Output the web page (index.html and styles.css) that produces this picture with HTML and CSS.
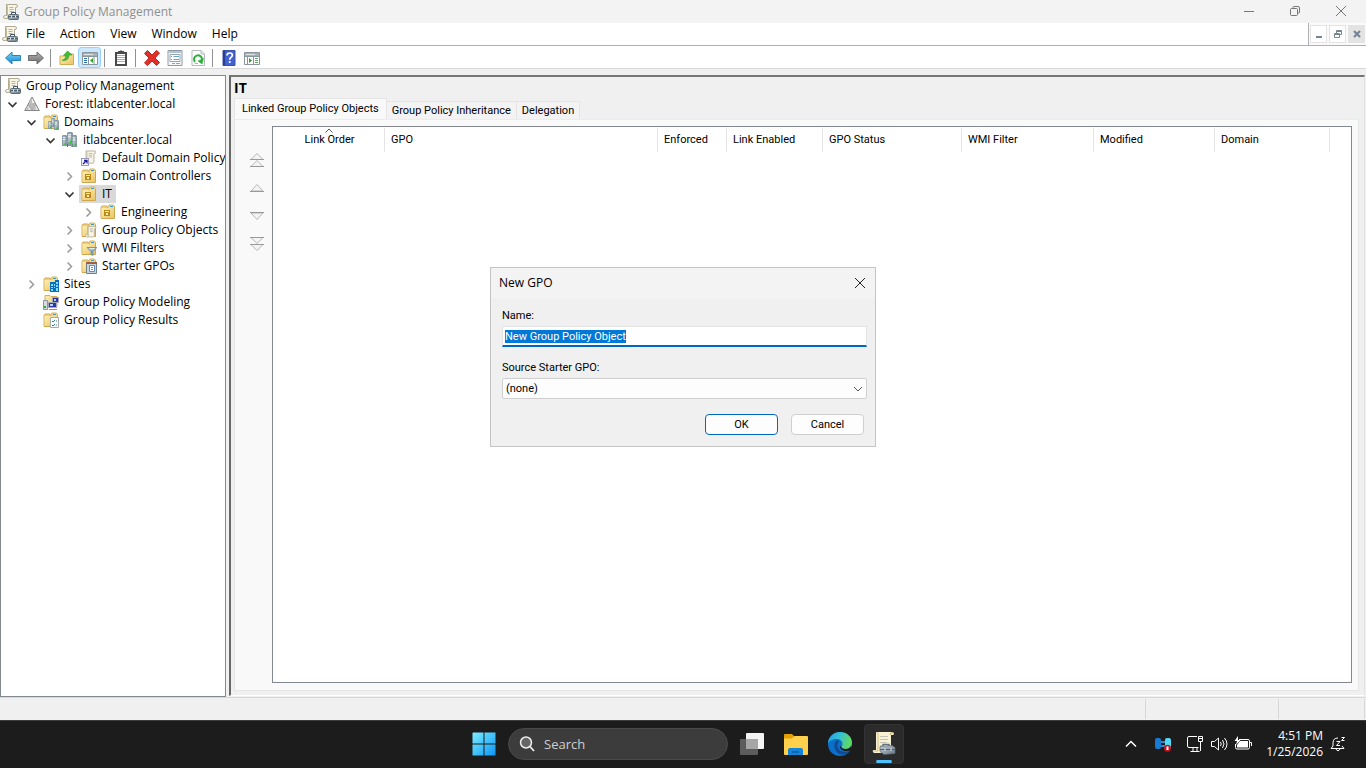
FILE: index.html
```html
<!DOCTYPE html>
<html lang="en">
<head>
  <meta charset="UTF-8">
  <meta name="viewport" content="width=device-width, initial-scale=1.0">
  <title>Group Policy Management</title>
  <link rel="stylesheet" href="styles.css">
</head>
<body>

  <!-- shared icons -->
  <svg class="sprite" aria-hidden="true">
    <defs>
      <linearGradient id="gFolder" x1="0" y1="0" x2="1" y2="1"><stop offset="0" stop-color="#fdeeb0"/><stop offset="1" stop-color="#e8c468"/></linearGradient>
      <linearGradient id="gBlue" x1="0" y1="0" x2="0" y2="1"><stop offset="0" stop-color="#7fd6fb"/><stop offset="1" stop-color="#0d86cf"/></linearGradient>
      <linearGradient id="gGray" x1="0" y1="0" x2="0" y2="1"><stop offset="0" stop-color="#b5b5b5"/><stop offset="1" stop-color="#6c6c6c"/></linearGradient>
      <linearGradient id="gSteel" x1="0" y1="0" x2="1" y2="1"><stop offset="0" stop-color="#c2ccd3"/><stop offset="1" stop-color="#667785"/></linearGradient>
      <symbol id="chevDown" viewBox="0 0 15 18"><path d="M3.5 7.500l4 4 4-4" fill="none" stroke="#333" stroke-width="1.600"/></symbol>
      <symbol id="chevRight" viewBox="0 0 15 18"><path d="M5.500 5.500l4 4-4 4" fill="none" stroke="#999" stroke-width="1.500"/></symbol>
      <symbol id="scroll" viewBox="0 0 16 16">
        <path d="M3.500.5H13q1.500 0 1.500 1.500T13 3.500h-.5V13q0 1.500-1.500 1.500H2Q.5 14.500.5 13t1.500-1.500h1.500z" fill="#f8f4e6" stroke="#b0a88f"/>
        <path d="M3.500 1q1 0 1 1.500v9H2M5 11.500q0 3-2 3" fill="none" stroke="#c5bb9c"/>
        <path d="M6.500 3.500h4M6.500 5.500h4M6.500 7.500h4" stroke="#b4b4ad"/>
      </symbol>
      <symbol id="gpm" viewBox="0 0 16 16">
        <use href="#scroll"/>
        <path d="M8.500 10.500V8.500h4v2" fill="none" stroke="#43525c"/>
        <rect x="5.500" y="10.500" width="10" height="5" rx="1" fill="url(#gSteel)" stroke="#5b6b77"/>
        <path d="M6 12.500h9" stroke="#4a5963"/><path d="M8 11.500h1v2H8zM12 11.500h1v2h-1z" fill="#e9eef0"/>
      </symbol>
      <symbol id="folder" viewBox="0 0 16 16">
        <path d="M1 3.500L2 2h5l1 1.500V14H1z" fill="#edce7a" stroke="#d3b05c"/>
        <path d="M8 2.500L9 1h4.500l1 1.500v11H8z" fill="#f6dc8d" stroke="#d3b05c"/>
        <path d="M10 2.500h3" stroke="#3999d4"/>
        <path d="M1.500 4h12.500v10h-12.500z" fill="url(#gFolder)"/>
        <path d="M1 14.500h13.500v-11" fill="none" stroke="#cfa64e"/>
      </symbol>
      <symbol id="ou" viewBox="0 0 16 16">
        <use href="#folder"/>
        <rect x="4" y="6" width="6" height="6" fill="#bb8918"/><path d="M5 7h4v1H5zM6 9h2v2H6z" fill="#fff0b7"/>
      </symbol>
      <symbol id="server" viewBox="0 0 6 11" preserveAspectRatio="none">
        <path d="M0 1L1 0h4l1 1v10H0z" fill="#8799a5"/>
        <path d="M1 1.500h3v8H1z" fill="#aebbc4"/><path d="M1 2.500h3M1 4.500h3" stroke="#eef3f5"/>
        <path d="M3 8h2v2H3z" fill="#23d019"/>
      </symbol>
      <symbol id="domain" viewBox="0 0 16 16">
        <use href="#server" x="5" y="0" width="6" height="12"/>
        <use href="#server" x="0" y="3" width="5" height="11"/>
        <use href="#server" x="10" y="3" width="5" height="12"/>
        <path d="M5.500 12v3M10 12v3" stroke="#5d6f7b"/><path d="M6 12h4v2H6z" fill="#8799a5"/>
      </symbol>
      <symbol id="domains" viewBox="0 0 16 16">
        <use href="#folder"/>
        <use href="#server" x="8" y="4" width="4" height="9"/>
        <use href="#server" x="5" y="7" width="4" height="8"/>
        <use href="#server" x="11" y="6" width="5" height="10"/>
      </symbol>
      <symbol id="forest" viewBox="0 0 16 16">
        <path d="M8 1l3.700 7H4.300z" fill="#f1f1f1" stroke="#858585"/>
        <path d="M4.300 8L8 14.500H.7zM11.700 8l3.600 6.500H8z" fill="#e4e4e4" stroke="#858585"/>
        <path d="M4.300 8h7.400L8 14.500z" fill="#b9b9b9"/>
        <path d="M8 2.500V8H5zM4.300 9.500V14H2zM11.700 9.500V14H9.500z" fill="#bdbdbd"/>
      </symbol>
      <symbol id="gpoLink" viewBox="0 0 16 16">
        <use href="#scroll" x="2" width="14" height="15"/>
        <rect x=".5" y="8.500" width="7" height="7" fill="#f3f2ff" stroke="#9b99b8"/>
        <path d="M2 14l3.500-3.500M3 10.500h3v3" fill="none" stroke="#221c96" stroke-width="1.300"/>
      </symbol>
      <symbol id="gpos" viewBox="0 0 16 16"><use href="#folder"/><use href="#scroll" x="4" y="4" width="12" height="12"/></symbol>
      <symbol id="wmi" viewBox="0 0 16 16">
        <use href="#folder"/>
        <path d="M6 7.500h10l-4 4v4l-2-1v-3z" fill="#89a8bb" stroke="#6c8697" stroke-width=".7"/><path d="M7.500 8h7l-2 1.500H9z" fill="#dce9ef"/>
      </symbol>
      <symbol id="starter" viewBox="0 0 16 16">
        <use href="#folder"/>
        <path d="M5.500 4.500h10v11h-10z" fill="#c8d5df" stroke="#6f7f8c"/><path d="M5 4h11v2H5z" fill="#9e6140"/>
        <path d="M8.500 7.500h5v6h-5z" fill="#fff" stroke="#5d8dbb"/><path d="M10 9.500h2M10 11.500h2" stroke="#5d8dbb"/>
      </symbol>
      <symbol id="sites" viewBox="0 0 16 16">
        <use href="#folder"/>
        <path d="M7 6h5V4h4v12H7z" fill="#0b6db7"/>
        <path d="M8 8h2v2H8zM11 8h1v2h-1zM8 11h2v1H8zM8 13h2v2H8zM11 11h1v1h-1zM13 6h2v2h-2zM13 9h2v2h-2zM13 12h2v3h-2z" fill="#82dcff"/>
      </symbol>
      <symbol id="modeling" viewBox="0 0 16 16">
        <path d="M2 1.500h5l1 1h6V13H2z" fill="url(#gFolder)" stroke="#d3b05c"/>
        <path d="M.5 6.500h4v9h-4z" fill="#d7dbe1" stroke="#8e95a0"/><path d="M1 12h2v2H1z" fill="#25b522"/>
        <path d="M9.500 3.500h6v5h-6zM5.500 8.500h8v5h-8z" fill="#2b37a8" stroke="#a4a9ba"/>
        <path d="M11 5h2v2h-2zM7 10h3v2H7z" fill="#b8cff8"/><path d="M6 15.500h8" stroke="#8d939b"/>
      </symbol>
      <symbol id="results" viewBox="0 0 16 16">
        <use href="#folder"/>
        <path d="M7.500 5.500h8v10h-8z" fill="#fbfcfc" stroke="#a3adb2"/>
        <path d="M9 9l1 1 2-2M9 13l1 1 2-2" fill="none" stroke="#267bc1"/><path d="M13 9h1M13 13h1" stroke="#70818a"/>
      </symbol>
    </defs>
  </svg>

  <header class="titlebar">
    <svg class="icon"><use href="#gpm"/></svg>
    <span class="titlebar-text">Group Policy Management</span>
    <div class="window-buttons">
      <button type="button" aria-label="Minimize"><svg viewBox="0 0 12 12"><path d="M1 6.500h10"/></svg></button>
      <button type="button" aria-label="Restore"><svg viewBox="0 0 12 12"><rect x="1.500" y="3.500" width="7" height="7" rx="1"/><path d="M4 3V2.500q0-1 1-1h4q1.500 0 1.500 1.500v4q0 1-1 1H9"/></svg></button>
      <button type="button" aria-label="Close"><svg viewBox="0 0 12 12"><path d="M1 1l10 10M11 1L1 11"/></svg></button>
    </div>
  </header>

  <nav class="menubar">
    <div class="menu-items">
      <svg class="icon"><use href="#gpm"/></svg>
      <button type="button">File</button>
      <button type="button">Action</button>
      <button type="button">View</button>
      <button type="button">Window</button>
      <button type="button">Help</button>
    </div>
    <div class="mdi-buttons">
      <button type="button" aria-label="Minimize child"><svg viewBox="0 0 10 10"><path d="M2 8h6" stroke-width="2"/></svg></button>
      <button type="button" aria-label="Restore child"><svg viewBox="0 0 10 10"><path d="M1.500 4.500h5v4h-5zM1 5.500h5.500M3.500 4V1.500h5v4H7M3.500 2.500h5"/></svg></button>
      <button type="button" class="mdi-close" aria-label="Close child"><svg viewBox="0 0 10 10"><path d="M2 2l6 6M8 2L2 8" stroke-width="2.200"/></svg></button>
    </div>
  </nav>

  <div class="toolbar">
    <button type="button" aria-label="Back"><svg class="icon" viewBox="0 0 16 16"><path d="M.5 8L7 2v3.500h8.500v5H7V14z" fill="url(#gBlue)" stroke="#2c83ba"/></svg></button>
    <button type="button" aria-label="Forward"><svg class="icon" viewBox="0 0 16 16"><path d="M15.500 8L9 2v3.500H.5v5H9V14z" fill="url(#gGray)" stroke="#6c6c6c"/></svg></button>
    <span class="separator"></span>
    <button type="button" aria-label="Up one level"><svg class="icon" viewBox="0 0 16 16"><path d="M1 6h7l1-2h5.500v10.500H1z" fill="url(#gFolder)" stroke="#d0ab55"/><path d="M3 10.500q4-1 4-5H4.500L8.500 1l4.500 4h-3q0 6-7 5.500z" fill="#43bd34" stroke="#2d9625" stroke-width=".6"/></svg></button>
    <button type="button" class="pressed" aria-label="Show console tree"><svg class="icon" viewBox="0 0 16 16"><path d="M.5 2.500h15v12H.5z" fill="#fff" stroke="#8b959d"/><path d="M1 3h14v3H1z" fill="#a6afb6"/><path d="M2 4.500h9" stroke="#dfe4e7"/><path d="M1 6.500h14M6.500 7v7M12 7v7" stroke="#8b959d"/><path d="M2 8.500h3M2 10.500h3M2 12.500h3" stroke="#286b9d"/><path d="M11 8v5L8 10.500z" fill="#2ca329"/></svg></button>
    <span class="separator"></span>
    <button type="button" aria-label="Paste"><svg class="icon" viewBox="0 0 16 16"><path d="M3 3h10v12H3z" fill="#fff" stroke="#4a4a4a" stroke-width="2"/><path d="M5 1h2l1-1 1 1h2v3H5z" fill="#4a4a4a"/><path d="M4 5.500h8M4 7.500h8M4 9.500h8M4 11.500h8" stroke="#aaa"/></svg></button>
    <span class="separator"></span>
    <button type="button" aria-label="Delete"><svg class="icon" viewBox="0 0 16 16"><path d="M3.500.5L8 5l4.500-4.500 3 2.500L11 8l4.500 4.500-3 3L8 11l-4.500 4.500-3-2.500L5 8 .5 3.500z" fill="#e0302a" stroke="#c42420"/></svg></button>
    <button type="button" aria-label="Properties"><svg class="icon" viewBox="0 0 16 16"><path d="M1 .5h14v15H1z" fill="#f6f9fb" stroke="#8c9ba7"/><path d="M1.500 1h13v2h-13z" fill="#b6c2ca"/><path d="M3 4.500h10v7H3z" fill="#fff" stroke="#95a5b2"/><path d="M4 6.500h1M4 9.500h1M6.500 6.500H12M6.500 9.500H12" stroke="#61a4cd"/><path d="M5 13.500h3M9 13.500h4" stroke="#96a5ae"/></svg></button>
    <button type="button" aria-label="Refresh"><svg class="icon" viewBox="0 0 16 16"><path d="M2 .5h9l3.500 3.500v11.500H2z" fill="#fff" stroke="#b3b9bd"/><path d="M11 .5V4h3.500" fill="none" stroke="#b3b9bd"/><path d="M5 12A4 4 0 1 1 12 9.500" fill="none" stroke="#2fae3b" stroke-width="2"/><path d="M13.500 8.500L12 14l-4-3zM5 13.500h3" fill="#2fae3b" stroke="#2fae3b" stroke-width=".6"/></svg></button>
    <span class="separator"></span>
    <button type="button" aria-label="Help"><svg class="icon" viewBox="0 0 16 16"><path d="M2 .5h12v15H2z" fill="#4263cf" stroke="#3a51a5"/><path d="M2 1h2v14H2z" fill="#263e95"/><path d="M6 5.500q0-2.500 2.700-2.500t2.700 2.200c0 2-2.700 2-2.700 4.500M8.700 11v2" fill="none" stroke="#fff" stroke-width="1.700"/></svg></button>
    <button type="button" aria-label="Show action pane"><svg class="icon" viewBox="0 0 16 16"><path d="M.5 2.500h15v12H.5z" fill="#fff" stroke="#8b959d"/><path d="M1 3h14v3H1z" fill="#a6afb6"/><path d="M2 4.500h9" stroke="#dfe4e7"/><path d="M1 6.500h14M9.500 7v7M3.500 7v7" stroke="#8b959d"/><path d="M11 8.500h3M11 10.500h3M11 12.500h3" stroke="#64a16a"/><path d="M5 8v5l3-2.500z" fill="#2ca329"/></svg></button>
  </div>

  <main class="workspace">
    <aside class="tree">
      <div class="node root"><span class="label"><svg class="icon"><use href="#gpm"/></svg>Group Policy Management</span></div>
      <ul>
        <li>
          <div class="node"><svg class="chevron"><use href="#chevDown"/></svg><span class="label"><svg class="icon"><use href="#forest"/></svg>Forest: itlabcenter.local</span></div>
          <ul>
            <li>
              <div class="node"><svg class="chevron"><use href="#chevDown"/></svg><span class="label"><svg class="icon"><use href="#domains"/></svg>Domains</span></div>
              <ul>
                <li>
                  <div class="node"><svg class="chevron"><use href="#chevDown"/></svg><span class="label"><svg class="icon"><use href="#domain"/></svg>itlabcenter.local</span></div>
                  <ul>
                    <li><div class="node"><svg class="chevron"></svg><span class="label"><svg class="icon"><use href="#gpoLink"/></svg>Default Domain Policy</span></div></li>
                    <li><div class="node"><svg class="chevron"><use href="#chevRight"/></svg><span class="label"><svg class="icon"><use href="#ou"/></svg>Domain Controllers</span></div></li>
                    <li>
                      <div class="node"><svg class="chevron"><use href="#chevDown"/></svg><span class="label selected"><svg class="icon"><use href="#ou"/></svg>IT</span></div>
                      <ul>
                        <li><div class="node"><svg class="chevron"><use href="#chevRight"/></svg><span class="label"><svg class="icon"><use href="#ou"/></svg>Engineering</span></div></li>
                      </ul>
                    </li>
                    <li><div class="node"><svg class="chevron"><use href="#chevRight"/></svg><span class="label"><svg class="icon"><use href="#gpos"/></svg>Group Policy Objects</span></div></li>
                    <li><div class="node"><svg class="chevron"><use href="#chevRight"/></svg><span class="label"><svg class="icon"><use href="#wmi"/></svg>WMI Filters</span></div></li>
                    <li><div class="node"><svg class="chevron"><use href="#chevRight"/></svg><span class="label"><svg class="icon"><use href="#starter"/></svg>Starter GPOs</span></div></li>
                  </ul>
                </li>
              </ul>
            </li>
            <li><div class="node"><svg class="chevron"><use href="#chevRight"/></svg><span class="label"><svg class="icon"><use href="#sites"/></svg>Sites</span></div></li>
            <li><div class="node"><svg class="chevron"></svg><span class="label"><svg class="icon"><use href="#modeling"/></svg>Group Policy Modeling</span></div></li>
            <li><div class="node"><svg class="chevron"></svg><span class="label"><svg class="icon"><use href="#results"/></svg>Group Policy Results</span></div></li>
          </ul>
        </li>
      </ul>
    </aside>

    <section class="details">
      <h1>IT</h1>
      <div class="tabs" role="tablist">
        <button type="button" role="tab" class="tab active" aria-selected="true">Linked Group Policy Objects</button>
        <button type="button" role="tab" class="tab">Group Policy Inheritance</button>
        <button type="button" role="tab" class="tab">Delegation</button>
      </div>
      <div class="tab-panel">
        <div class="order-buttons">
          <button type="button" aria-label="Move to top"><svg viewBox="0 0 16 16"><path d="M8 1.500L14 7.500H2zM8 8.500l6 6H2z"/><path class="base" d="M1 7.500h14M1 14.500h14"/></svg></button>
          <button type="button" aria-label="Move up"><svg viewBox="0 0 16 16"><path d="M8 4.500l6 6.500H2z"/><path class="base" d="M1 11.500h14"/></svg></button>
          <button type="button" aria-label="Move down"><svg viewBox="0 0 16 16"><path d="M8 11.500L2 5h12z"/><path class="base" d="M1 4.500h14"/></svg></button>
          <button type="button" aria-label="Move to bottom"><svg viewBox="0 0 16 16"><path d="M8 7.500l-6-6h12zM8 14.500l-6-6h12z"/><path class="base" d="M1 1.500h14M1 8.500h14"/></svg></button>
        </div>
        <div class="list">
          <table>
            <thead>
              <tr>
                <th class="col-order"><svg class="sort" viewBox="0 0 8 5"><path d="M.5 4.500L4 1l3.500 3.500" fill="none" stroke="#555"/></svg>Link Order</th>
                <th class="col-gpo">GPO</th>
                <th class="col-enforced">Enforced</th>
                <th class="col-enabled">Link Enabled</th>
                <th class="col-status">GPO Status</th>
                <th class="col-wmi">WMI Filter</th>
                <th class="col-modified">Modified</th>
                <th class="col-domain">Domain</th>
              </tr>
            </thead>
            <tbody></tbody>
          </table>
        </div>
      </div>
    </section>
  </main>

  <div class="statusbar"><span class="status-main"></span><span class="status-cell"></span><span class="status-end"></span></div>

  <footer class="taskbar">
    <div class="apps">
      <button type="button" class="app" aria-label="Start">
        <svg viewBox="0 0 24 24"><defs><linearGradient id="gWin" gradientUnits="userSpaceOnUse" x1="0" y1="0" x2="24" y2="24"><stop offset="0" stop-color="#7df0ff"/><stop offset="1" stop-color="#0a93f5"/></linearGradient></defs><path d="M1 .5h10.500v11H.5V1zM12.500.5h11v11h-11zM.5 12.500h11v11H.5zM12.500 12.500h11v11h-11z" fill="url(#gWin)"/></svg>
      </button>
      <label class="search">
        <svg viewBox="0 0 16 16"><circle cx="7" cy="6.500" r="5.500" fill="#666" stroke="#eee" stroke-width="1.500"/><path d="M11 10.500l4 4.500" stroke="#eee" stroke-width="1.800"/></svg>
        <input type="text" placeholder="Search" aria-label="Search">
      </label>
      <button type="button" class="app" aria-label="Task view">
        <svg viewBox="0 0 24 24"><rect x="6" y="1" width="18" height="16" rx="1" fill="#f4f4f4"/><rect x="0" y="7" width="18" height="16" rx="1" fill="#5c5c5c"/><path d="M6 7h12v10H6z" fill="#a6a6a6"/></svg>
      </button>
      <button type="button" class="app" aria-label="File Explorer">
        <svg viewBox="0 0 24 24"><path d="M0 3q0-1 1-1h7l2 2v4H0z" fill="#e5a100"/><path d="M0 6.500h8L10.500 4H23q1 0 1 1v17q0 1-1 1H1q-1 0-1-1z" fill="#ffd04b"/><path d="M4 23v-5q0-2 2-2h11q2 0 2 2v5z" fill="#1584d6"/><path d="M8 20h7" stroke="#075fae" stroke-width="1.500"/></svg>
      </button>
      <button type="button" class="app" aria-label="Microsoft Edge">
        <svg viewBox="0 0 24 24">
          <defs><linearGradient id="gEdge" x1="0" y1="0" x2="1" y2=".3"><stop offset="0" stop-color="#1d9de8"/><stop offset=".5" stop-color="#35c1d4"/><stop offset="1" stop-color="#5ed864"/></linearGradient></defs>
          <circle cx="12" cy="12" r="12" fill="#0b70ca"/>
          <path d="M0 12C0 4.500 6 0 12 0c7 0 12 5 12 10.500 0 4-3 6.500-6.500 6.500-2.500 0-4-1-4-2 0-.8 1-1.300 1-3C14.500 9 12 7 8.500 7 4 7 .5 9.500 0 12z" fill="url(#gEdge)"/>
          <path d="M8.500 8.500C5 11 6 18 10 21c4 3 9 1.500 12-2.500-4 2.500-10 1.500-12-2.500-1.500-3 0-5.500 1.500-6.500-1-.8-2-1.200-3-1z" fill="#134a91"/>
          <path d="M13.500 15c0 1 1.500 2 4 2 2.500 0 4.600-1.200 5.700-3.300L24 18l-1.800.5C17 20 12 18.500 11.800 14z" fill="#1c1c1c"/>
        </svg>
      </button>
      <button type="button" class="app running" aria-label="Group Policy Management">
        <svg viewBox="0 0 24 24">
          <path d="M4 0h17q1.500 1 .5 3H19v18H2q-2-1-1-3h3z" fill="#f7f0d6"/><path d="M4 0q2 0 2 2v17H1" fill="none" stroke="#d8c078"/><path d="M18 3q0-2.500 3-2.500" fill="none" stroke="#c0a55a"/>
          <path d="M8 4.500h8M8 7.500h8M8 10.500h7M8 13.500h2" stroke="#c4c2b2"/>
          <path d="M11 14.500v-2h6v2" fill="none" stroke="#61717c" stroke-width="1.500"/><path d="M8 14.500l12-1 3 2v6l-11 1-4-3z" fill="url(#gSteel)" stroke="#5a6975" stroke-width=".7"/><path d="M8 17.500h15" stroke="#53616c"/><path d="M13 16v3M19 16v3" stroke="#dce3e7"/>
        </svg>
      </button>
    </div>
    <div class="tray">
      <button type="button" class="tray-icon tray-more" aria-label="Hidden icons"><svg viewBox="0 0 20 16"><path d="M5 10.500l5-5 5 5" stroke-width="1.500"/></svg></button>
      <button type="button" class="tray-icon tray-agent" aria-label="Azure agent"><svg viewBox="0 0 20 16"><g stroke="none"><rect x="2" y="2" width="6" height="11" rx="2" fill="#177bd5"/><rect x="12" y="2" width="6" height="11" rx="2" fill="#53d9f4"/><path d="M8 5h4v2H8zM8 9h4v2H8z" fill="#288bcb"/><circle cx="14.500" cy="12.200" r="3.500" fill="#c1141d"/><path d="M13.500 10.500h2v3.500h-2z" fill="#fff"/></g></svg></button>
      <button type="button" class="tray-icon" aria-label="Network"><svg viewBox="0 0 20 16"><path d="M12 .5H4Q2.500.5 2.500 2v8q0 1.500 1.500 1.500h9.500M5.500 15.500h9M8 12v3M12 12v3M13.500.5h4v5h-4zM15.500 6v9M14 2.500h3"/></svg></button>
      <button type="button" class="tray-icon" aria-label="Volume"><svg viewBox="0 0 20 16"><path d="M2.500 5.500h3L9.500 2v12l-4-3.500h-3zM11.500 6q1.500 2 0 4M13.500 4q3 4 0 8M15.500 2q5 6 0 12"/></svg></button>
      <button type="button" class="tray-icon" aria-label="Battery"><svg viewBox="0 0 20 16"><path d="M6 3.500h9q1.500 0 1.500 1.500v6.500q0 1.500-1.500 1.500H4q-1.500 0-1.500-1.500V8M17 6.500h1.500v3.500"/><path d="M7 5h8v6.500H4V9z" fill="#fff" stroke="none"/><path d="M5 0L1.500 5H4L3 9l4.500-5H5z" fill="#fff" stroke="none"/></svg></button>
      <button type="button" class="clock"><span>4:51 PM</span><span>1/25/2026</span></button>
      <button type="button" class="tray-icon" aria-label="Notifications"><svg viewBox="0 0 20 16"><path d="M10 2q-5 0-5 5v3l-2 2.500h13L14 10M8 13q2 3.500 4 0M8.500 5.500H12l-3.500 4H12M13.500 1.500h3l-3 3h3"/></svg></button>
    </div>
  </footer>

  <div class="dialog-layer">
    <form class="dialog" id="newGpo" aria-labelledby="dialogTitle">
      <div class="dialog-title">
        <span id="dialogTitle">New GPO</span>
        <button type="button" aria-label="Close dialog"><svg viewBox="0 0 12 12"><path d="M1 1l10 10M11 1L1 11" stroke="#222" fill="none"/></svg></button>
      </div>
      <div class="dialog-body">
        <label for="gpoName">Name:</label>
        <input type="text" id="gpoName" value="New Group Policy Object">
        <label for="starterGpo">Source Starter GPO:</label>
        <div class="select-box">
          <select id="starterGpo"><option>(none)</option></select>
          <svg viewBox="0 0 10 6"><path d="M1 1l4 4 4-4" fill="none" stroke="#555"/></svg>
        </div>
        <div class="dialog-actions">
          <button type="submit" class="default">OK</button>
          <button type="button">Cancel</button>
        </div>
      </div>
    </form>
  </div>

  <script>
    const nameField = document.getElementById('gpoName');
    nameField.focus();
    nameField.select();

    document.getElementById('newGpo').addEventListener('submit', function (e) {
      e.preventDefault();
    });
  </script>

</body>
</html>
```
FILE: styles.css
```css
* {
  box-sizing: border-box;
}

body {
  margin: 0;
  height: 100vh;
  display: flex;
  flex-direction: column;
  overflow: hidden;
  background: #f0f0f0;
  color: #000;
  font-family: "Open Sans", "Noto Sans", sans-serif;
  font-size: 12px;
  line-height: 18px;
}

button,
input,
select {
  font: inherit;
  color: inherit;
}

button {
  border: none;
  background: none;
  padding: 0;
}

.sprite {
  position: absolute;
  width: 0;
  height: 0;
}

.icon {
  width: 16px;
  height: 16px;
  flex: none;
  display: block;
}

/* title bar */
.titlebar {
  display: flex;
  align-items: center;
  gap: 5px;
  height: 23px;
  padding: 0 2px 0 3px;
  background: #f3f3f3;
  color: #8f8f8f;
}

.window-buttons {
  display: flex;
  margin-left: auto;
}

.window-buttons button {
  width: 46px;
  height: 23px;
  display: grid;
  place-items: center;
  padding-bottom: 2px;
}

.window-buttons svg {
  width: 12px;
  height: 12px;
  fill: none;
  stroke: #777;
}

.menubar {
  display: flex;
  height: 23px;
  background: #fff;
}

.menu-items {
  flex: 1;
  display: flex;
  align-items: center;
  padding-left: 2px;
  border-right: 1px solid #b0b0b4;
  border-bottom: 1px solid #b0b0b4;
}

.menu-items button {
  padding: 0 7px 0 8px;
}

.mdi-buttons {
  display: flex;
  gap: 2px;
  padding: 2px 1px;
  border-bottom: 1px solid #b0b0b4;
  background: #fafafa;
}

.mdi-buttons button {
  width: 17px;
  height: 18px;
  display: grid;
  place-items: center;
  background: #fff;
  border: 1px solid #e3e3e3;
}

.mdi-buttons svg {
  width: 10px;
  height: 10px;
  fill: none;
  stroke: #74859a;
}

.mdi-buttons .mdi-close {
  background: #e3e3e3;
}

.toolbar {
  display: flex;
  align-items: center;
  height: 23px;
  padding: 1px 0 0 1px;
  background: #fff;
  border-bottom: 1px solid #d8d8d8;
}

.toolbar button {
  width: 23px;
  height: 21px;
  display: grid;
  place-items: center;
}

.toolbar .pressed {
  background: #cce8ff;
  border: 1px solid #99d1ff;
  border-radius: 3px;
}

.toolbar .separator {
  width: 1px;
  height: 18px;
  margin: 0 4px 0 3px;
  background: #909090;
}

.workspace {
  flex: 1;
  display: flex;
  gap: 3px;
  min-height: 0;
  padding: 6px 1px 0 0;
}

/* console tree */
.tree {
  width: 226px;
  flex: none;
  padding: 1px 0 0 4px;
  background: #fff;
  border: 1px solid #828790;
  overflow: hidden;
  white-space: nowrap;
}

.tree ul {
  list-style: none;
  margin: 0;
  padding: 0;
}

.tree ul ul {
  padding-left: 19px;
}

.node {
  display: flex;
  gap: 2px;
  height: 18px;
}

.chevron {
  width: 15px;
  height: 18px;
  flex: none;
}

.label {
  display: flex;
  align-items: center;
  gap: 5px;
  padding: 0 4px 0 2px;
}

.root .label {
  padding-left: 0;
}

.label.selected {
  background: #d9d9d9;
}

/* details pane */
.details {
  flex: 1;
  display: flex;
  flex-direction: column;
  min-width: 0;
  margin-bottom: 1px;
  padding: 2px 5px 4px 3px;
  border: 2px solid #696969;
  border-top-color: #757575;
  border-right: 1px solid #e3e3e3;
  border-bottom: 1px solid #fff;
}

.details h1 {
  margin: 0;
  padding-bottom: 1px;
  font-size: 14px;
  line-height: 18px;
  font-weight: 700;
}

.tabs {
  display: flex;
  align-items: flex-end;
  height: 21px;
  font-family: Roboto, "Liberation Sans", sans-serif;
  font-size: 11px;
}

.tab {
  height: 18px;
  padding: 0 5px;
  border: 1px solid #e5e5e5;
  border-left: none;
  border-bottom: none;
  background: #f3f3f3;
}

.tab.active {
  height: 21px;
  padding: 0 7px;
  border-left: 1px solid #e5e5e5;
  background: #f9f9f9;
}

.tab-panel {
  flex: 1;
  display: flex;
  padding: 6px 6px 7px 0;
  background: #f9f9f9;
  border: 1px solid #e5e5e5;
  border-top-color: #ececec;
}

.order-buttons {
  display: flex;
  flex-direction: column;
  align-items: center;
  gap: 12px;
  width: 37px;
  padding: 26px 0 0 7px;
}

.order-buttons button {
  width: 16px;
  height: 16px;
}

.order-buttons svg {
  display: block;
  width: 16px;
  height: 16px;
  fill: #f4f4f4;
  stroke: #b5b5b5;
}

.order-buttons .base {
  stroke: #999;
}

.list {
  flex: 1;
  min-width: 0;
  background: #fff;
  border: 1px solid #828790;
  overflow: hidden;
}

.list table {
  table-layout: fixed;
  width: 1057px;
  margin-top: 1px;
  border-collapse: separate;
  border-spacing: 0;
  font-family: Roboto, "Liberation Sans", sans-serif;
  font-size: 11px;
}

.list th {
  height: 24px;
  padding: 0 0 0 6px;
  border-right: 1px solid #e5e5e5;
  font-weight: 400;
  text-align: left;
  line-height: 14px;
}

.list .col-order {
  position: relative;
  width: 112px;
  padding: 0 0 0 2px;
  text-align: center;
}

.sort {
  position: absolute;
  top: 0;
  left: calc(50% - 4px);
  width: 8px;
  height: 5px;
}

.col-gpo { width: 273px; }
.col-enforced { width: 69px; }
.col-enabled { width: 96px; }
.col-status { width: 139px; }
.col-wmi { width: 132px; }
.col-modified { width: 121px; }
.col-domain { width: 115px; }

.statusbar {
  display: flex;
  height: 23px;
  padding: 1px 1px 1px 0;
  border-top: 1px solid #d7d7d7;
}

.statusbar span {
  border-right: 1px solid #d7d7d7;
}

.status-main {
  flex: 1;
}

.status-cell {
  width: 133px;
}

.status-end {
  width: 86px;
}

/* taskbar */
.taskbar {
  display: grid;
  grid-template-columns: 1fr auto 1fr;
  align-items: center;
  height: 48px;
  padding: 0 0 1px 2px;
  background: #1c1c1c;
  border-top: 1px solid #3b3b3b;
  color: #fff;
}

.apps {
  grid-column: 2;
  display: flex;
  align-items: center;
  gap: 4px;
}

.app {
  width: 40px;
  height: 40px;
  display: grid;
  place-items: center;
  border-radius: 4px;
}

.app svg {
  width: 24px;
  height: 24px;
}

.app.running {
  position: relative;
  background: #2b2b2b;
  border: 1px solid #333;
}

.app.running::after {
  content: "";
  position: absolute;
  bottom: 0;
  left: 11px;
  width: 16px;
  height: 3px;
  border-radius: 2px;
  background: #4cc2ff;
}

.search {
  display: flex;
  align-items: center;
  gap: 9px;
  width: 220px;
  height: 32px;
  padding: 0 10px;
  border: 1px solid #494949;
  border-radius: 16px;
  background: #3c3c3c;
}

.search svg {
  width: 16px;
  height: 16px;
  flex: none;
}

.search input {
  min-width: 0;
  flex: 1;
  padding: 0;
  border: none;
  background: none;
  font-size: 13px;
}

.search input::placeholder {
  color: #cfcfcf;
  opacity: 1;
}

.tray {
  display: flex;
  align-items: center;
  justify-content: flex-end;
  padding-right: 16px;
}

.tray-icon {
  width: 24px;
  height: 24px;
  display: grid;
  place-items: center;
}

.tray-more,
.tray-agent {
  width: 32px;
}

.tray-agent {
  margin-right: 4px;
}

.tray-icon svg {
  width: 20px;
  height: 16px;
  fill: none;
  stroke: #fff;
}

.clock {
  display: flex;
  flex-direction: column;
  width: 68px;
  margin-right: 3px;
  text-align: right;
  line-height: 16px;
}

/* new GPO dialog */
.dialog-layer {
  position: absolute;
  inset: 0;
  padding-bottom: 54px;
  display: grid;
  place-items: center;
}

.dialog {
  width: 386px;
  background: #f0f0f0;
  border: 1px solid #c4c4c4;
}

.dialog-title {
  display: flex;
  align-items: center;
  justify-content: space-between;
  height: 30px;
  padding: 0 9px 0 8px;
  background: #f3f3f3;
}

.dialog-title button {
  width: 12px;
  height: 12px;
}

.dialog-title svg {
  display: block;
}

.dialog-body {
  display: flex;
  flex-direction: column;
  padding: 9px 8px 11px 11px;
  font-family: Roboto, "Liberation Sans", sans-serif;
  font-size: 11px;
}

.dialog-body label {
  margin-bottom: 1px;
}

.dialog-body input {
  height: 21px;
  margin-bottom: 12px;
  padding: 0 2px;
  background: #fff;
  border: 1px solid #e3e3e3;
  border-bottom: 2px solid #0067c0;
  outline: none;
}

.dialog-body input::selection {
  background: #0078d7;
  color: #fff;
}

.select-box {
  position: relative;
  height: 21px;
}

.select-box select {
  width: 100%;
  height: 21px;
  padding: 0 3px;
  appearance: none;
  background: #fdfdfd;
  border: 1px solid #cfcfcf;
  border-radius: 2px;
}

.select-box svg {
  position: absolute;
  top: 8px;
  right: 4px;
  width: 10px;
  height: 6px;
  pointer-events: none;
}

.dialog-actions {
  display: flex;
  justify-content: flex-end;
  gap: 13px;
  margin-top: 15px;
  padding-right: 3px;
}

.dialog-actions button {
  width: 73px;
  height: 21px;
  background: #fdfdfd;
  border: 1px solid #cfcfcf;
  border-radius: 4px;
}

.dialog-actions .default {
  border-color: #0067c0;
}
```
